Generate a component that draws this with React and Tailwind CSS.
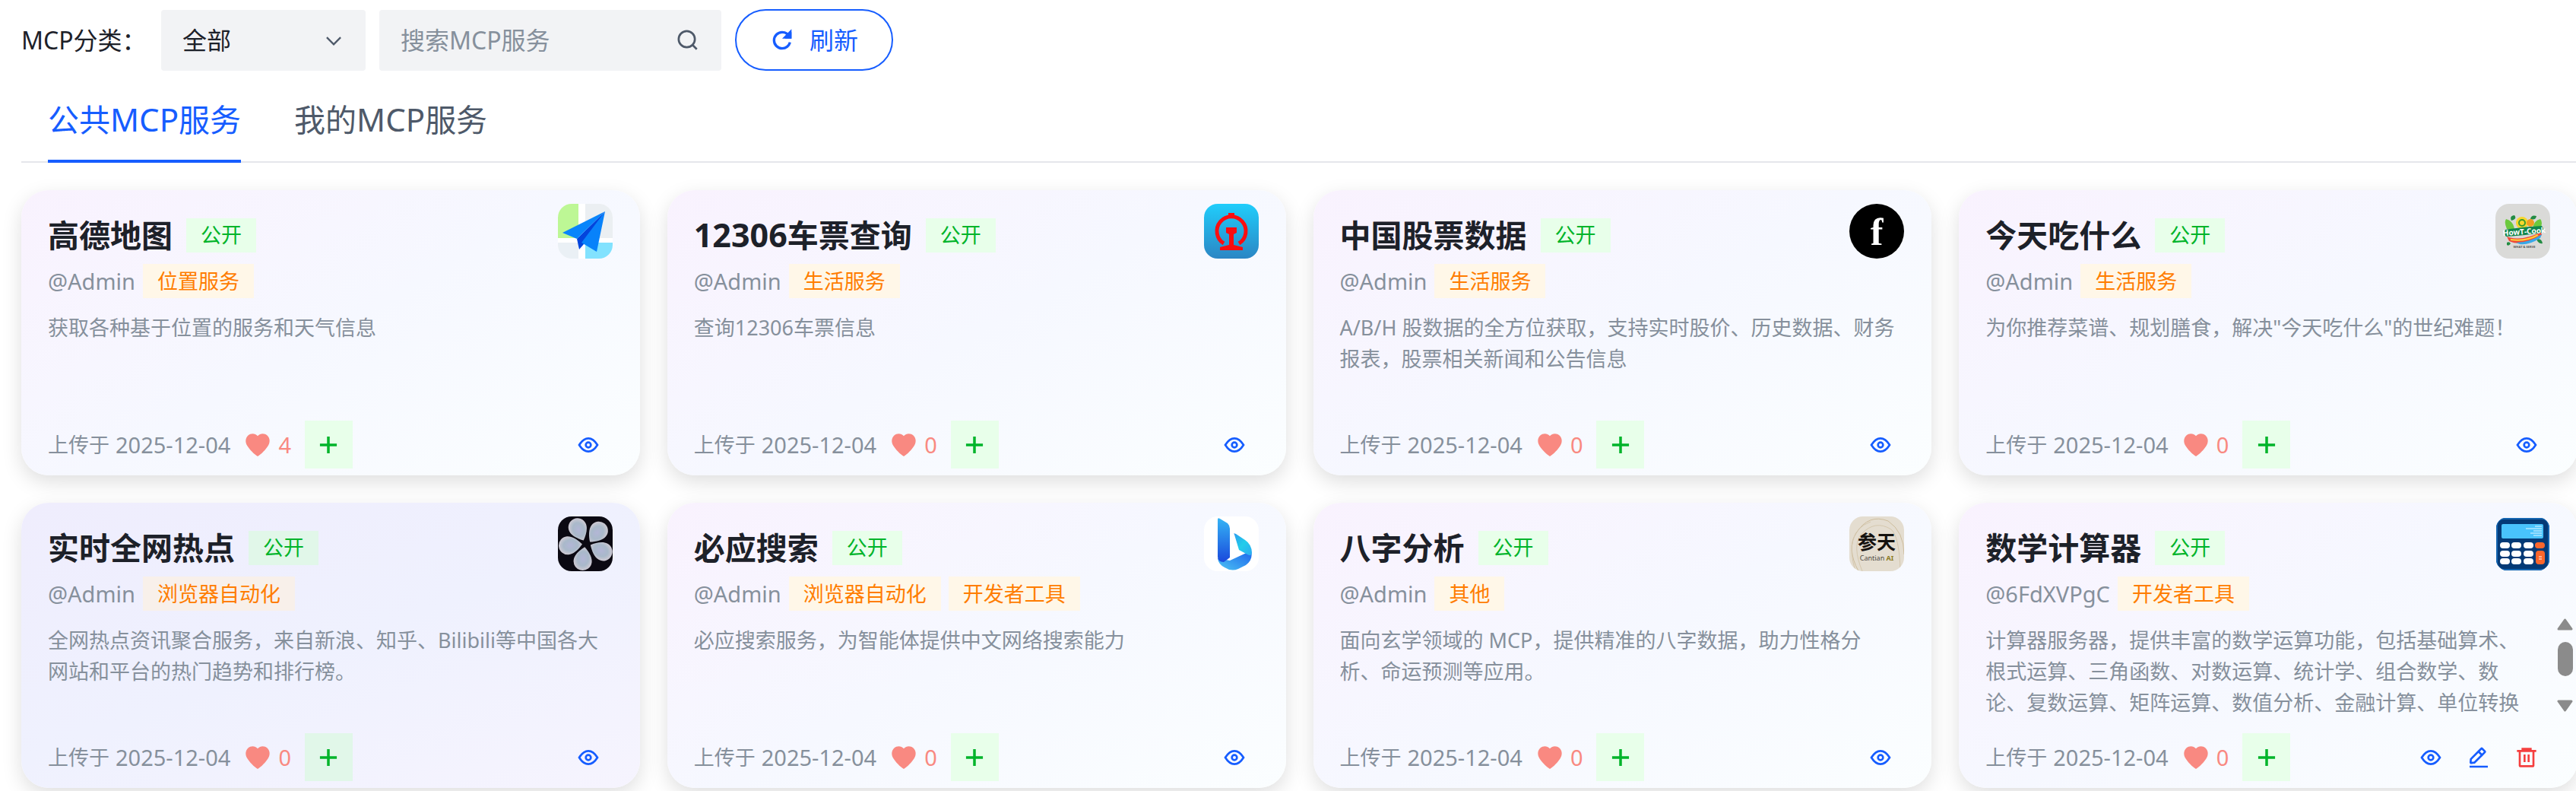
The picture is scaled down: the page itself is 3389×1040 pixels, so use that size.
import React from "react";

const glyphs = {
  eye: ["M24 37c6.627 0 12.627-4.333 18-13-5.373-8.667-11.373-13-18-13-6.627 0-12.627 4.333-18 13 5.373 8.667 11.373 13 18 13Z", "M29 24a5 5 0 1 1-10 0 5 5 0 0 1 10 0Z"],
  edit: ["m30.48 19.038 5.733-5.734a1 1 0 0 0 0-1.414l-5.586-5.586a1 1 0 0 0-1.414 0l-5.734 5.734m7 7L15.763 33.754a1 1 0 0 1-.59.286l-6.048.708a1 1 0 0 1-1.113-1.069l.477-6.31a1 1 0 0 1 .29-.631l14.7-14.7m7 7-7-7M6 42h36"],
  trash: ["M5 11h5.5m0 0v29a1 1 0 0 0 1 1h25a1 1 0 0 0 1-1V11m-27 0H16m21.5 0H43m-5.5 0H32m-16 0V7h16v4m-16 0h16M20 18v15m8-15v15"],
  plus: ["M5 24h38M24 5v38"],
  refresh: ["M38.837 18C36.463 12.136 30.715 8 24 8 15.163 8 8 15.163 8 24s7.163 16 16 16c7.455 0 13.72-5.1 15.496-12M40 8v10H30"],
  search: ["M33.072 33.071c6.248-6.248 6.248-16.379 0-22.627-6.249-6.249-16.38-6.249-22.628 0-6.248 6.248-6.248 16.379 0 22.627 6.248 6.248 16.38 6.248 22.628 0Zm0 0 8.485 8.485"],
  down: ["M39.6 17.443 24.043 33 8.487 17.443"],
};

function Icon({ name, className, stroke = 4 }) {
  return (
    <svg viewBox="0 0 48 48" fill="none" stroke="currentColor" strokeWidth={stroke} className={className} aria-hidden="true">
      {glyphs[name].map((d) => <path key={d} d={d} />)}
      {name === "refresh" && <path d="M40 8v10H30Z" fill="currentColor" />}
    </svg>
  );
}

function Heart() {
  return (
    <svg viewBox="0 0 36 36" className="size-9" aria-hidden="true">
      <path fill="currentColor" d="M18 6.2C21.2 2.4 27 2.2 30.6 5.4C34.4 8.8 34.6 14.6 31.6 19.2C28.600 24 22.800 30 18 33C13.200 30 7.400 24 4.400 19.200C1.400 14.600 1.600 8.800 5.400 5.400C9 2.200 14.800 2.400 18 6.200Z" />
    </svg>
  );
}

const petal = "M0-16C6-11 12-4 12 3A12 12 0 0 1-12 3C-12-4-6-11 0-16Z";

const logos = {
  map: (
    <>
      <rect width="72" height="72" fill="#fff" />
      <path d="M0 0H27V45H0Z" fill="#bdf795" />
      <path d="M36 0H72V45H36Z" fill="#ebeff2" />
      <path d="M0 51H27V72H0Z" fill="#eaf0f5" />
      <path d="M36 51H72V72H36Z" fill="#82e2fe" />
      <path d="M25 46 28 60 34 53 62 10Z" fill="#0345dc" />
      <path d="M62 10 6 38 25 46Z" fill="#0885fb" />
      <path d="M62 10 31 51 51 63Z" fill="#0882fa" />
    </>
  ),
  rail: (
    <>
      <defs><linearGradient id="railBg" x1="0" y1="0" x2="0" y2="1"><stop stopColor="#20cdfb" /><stop offset="1" stopColor="#2b86c4" /></linearGradient></defs>
      <rect width="72" height="72" fill="url(#railBg)" />
      <path d="M26 52A19 19 0 1 1 46 52" fill="none" stroke="#fa0d10" strokeWidth="5" />
      <path d="M32 12h8v7h-8ZM29 31h14v7l-4 2v14l12 3v4H21v-4l12-3V40l-4-2Z" fill="#fa0d10" />
    </>
  ),
  f: (
    <>
      <circle cx="36" cy="36" r="36" fill="#000" />
      <text x="36" y="54" textAnchor="middle" fontSize="50" fontWeight="700" fill="#fff" fontFamily="'Liberation Serif', serif">f</text>
    </>
  ),
  cook: (
    <>
      <rect width="72" height="72" fill="#dadad8" />
      <path d="M15 33Q11 24 14 20Q23 22 25 33ZM59 33Q63 24 59 20Q50 22 49 33Z" fill="#6cc93e" />
      <path d="M21 22Q18 16 25 15Q29 20 21 22ZM46 20Q47 14 54 16Q53 22 46 20ZM54 46Q61 45 62 52Q56 53 54 46ZM15 51q3-2 5 1-2 4-5 2Z" fill="#238c43" />
      <circle cx="35" cy="25" r="8" fill="#f7d72e" />
      <circle cx="35" cy="25" r="4" fill="none" stroke="#3b9b2b" strokeWidth="2" />
      <circle cx="46" cy="25" r="5" fill="#ef9d22" />
      <path d="M15 43Q34 50 60 37L61 41Q36 57 18 49Z" fill="#ef4938" />
      <path d="M27 51Q45 51 61 40L59 45Q43 55 32 53Z" fill="#38a8e8" />
      <path d="M20 47Q39 50 56 41" fill="none" stroke="#ffd338" strokeWidth="2" />
      <path d="M13 34Q36 30 61 29Q65 33 61 38Q36 42 14 43Q10 39 13 34Z" fill="#10864c" />
      <text x="38" y="40" textAnchor="middle" fontSize="10" fontWeight="700" fill="#fff" fontFamily="'Open Sans', sans-serif" transform="rotate(-4 38 38)">HowT-Cook</text>
      <text x="38" y="58" textAnchor="middle" fontSize="4" fontWeight="700" fill="#555" fontFamily="'Open Sans', sans-serif">WHAT &amp; SERVE</text>
    </>
  ),
  opal: (
    <>
      <defs><radialGradient id="opalFill"><stop stopColor="#b3b6d6" /><stop offset=".6" stopColor="#a9b9ca" /><stop offset="1" stopColor="#cbc8d2" /></radialGradient></defs>
      <rect width="72" height="72" fill="#0b0912" />
      <g fill="url(#opalFill)">
        <path d={petal} transform="translate(27 17) rotate(155)" />
        <path d={petal} transform="translate(52 21) rotate(218)" />
        <path d={petal} transform="translate(16 38) rotate(85)" />
        <path d={petal} transform="translate(57 45) rotate(-62)" />
        <path d={petal} transform="translate(33 56) rotate(8)" />
      </g>
    </>
  ),
  bing: (
    <>
      <defs>
        <linearGradient id="bingStem" x1="0" y1="0" x2="0" y2="1"><stop stopColor="#35b4f5" /><stop offset="1" stopColor="#1a49dc" /></linearGradient>
        <linearGradient id="bingBowl" x1="1" y1="0" x2="0" y2="1"><stop stopColor="#1c64ec" /><stop offset="1" stopColor="#4dc4f3" /></linearGradient>
        <linearGradient id="bingFin" x1="0" y1="0" x2="1" y2="1"><stop stopColor="#2c9cf0" /><stop offset=".5" stopColor="#22cdea" /><stop offset="1" stopColor="#2daaf2" /></linearGradient>
      </defs>
      <rect width="72" height="72" fill="#fff" />
      <path d="M18 55 34 58 62 45Q65 57 55 64L45 69Q36 73 27 67Q19 63 18 55Z" fill="url(#bingBowl)" />
      <path d="M40 24Q38 21 42 23L54 31Q63 37 63 48Q62 53 57 50L46 44Z" fill="url(#bingFin)" />
      <path d="M18 4Q18 1 21 3L31 9Q34 12 34 16V54L26 60Q18 60 18 53Z" fill="url(#bingStem)" />
    </>
  ),
  cantian: (
    <>
      <rect width="72" height="72" fill="#e4ddd0" />
      <path d="M12 72Q-4 42 9 22Q25-4 51 6Q72 20 72 50" fill="none" stroke="#cdbd9d" strokeWidth="1" />
      <path d="M17 72Q3 38 16 23Q34 4 55 17Q66 27 67 72M8 72Q-8 20 28 7" fill="none" stroke="#d4c7ae" strokeWidth="1" />
      <text x="36" y="43" textAnchor="middle" fontSize="25" fontWeight="700" fill="#15120f" fontFamily="'Noto Sans CJK SC', sans-serif">参天</text>
      <text x="36" y="58" textAnchor="middle" fontSize="9" fill="#4d4941" fontFamily="'Noto Sans', sans-serif">Cantian <tspan fill="#8d7a20" fontWeight="700">AI</tspan></text>
    </>
  ),
  calc: (
    <>
      <rect x="2" y="3" width="68" height="67" rx="9" fill="#043a76" stroke="#1565b0" strokeWidth="2" />
      <rect x="8" y="10" width="55" height="19" rx="2" fill="#49c3fc" />
      <path d="M52 13h9M40 16h21M50 19h11M46 22h15M50 25h11" stroke="#e7f8ff" strokeWidth="1" />
      <g fill="#fff">
        {[34, 45, 55].map((y) => [6, 21, 37].map((x) => <rect key={x + "-" + y} x={x} y={y} width="13" height="8" rx="4" />))}
      </g>
      <rect x="52" y="34" width="13" height="8" rx="4" fill="#fb672c" />
      <rect x="53" y="45" width="12" height="18" rx="4" fill="#fb672c" />
      <path d="M57 53h4M57 56h4" stroke="#fff" strokeWidth="1" />
    </>
  ),
};

const services = [
  { logo: "map", title: "高德地图", tags: ["位置服务"], likes: 4, desc: "获取各种基于位置的服务和天气信息" },
  { logo: "rail", title: "12306车票查询", tags: ["生活服务"], likes: 0, desc: "查询12306车票信息" },
  { logo: "f", title: "中国股票数据", tags: ["生活服务"], likes: 0, desc: "A/B/H 股数据的全方位获取，支持实时股价、历史数据、财务报表，股票相关新闻和公告信息" },
  { logo: "cook", title: "今天吃什么", tags: ["生活服务"], likes: 0, desc: "为你推荐菜谱、规划膳食，解决\"今天吃什么\"的世纪难题！" },
  { logo: "opal", title: "实时全网热点", tags: ["浏览器自动化"], likes: 0, active: true, desc: "全网热点资讯聚合服务，来自新浪、知乎、Bilibili等中国各大网站和平台的热门趋势和排行榜。" },
  { logo: "bing", title: "必应搜索", tags: ["浏览器自动化", "开发者工具"], likes: 0, desc: "必应搜索服务，为智能体提供中文网络搜索能力" },
  { logo: "cantian", title: "八字分析", tags: ["其他"], likes: 0, desc: "面向玄学领域的 MCP，提供精准的八字数据，助力性格分析、命运预测等应用。" },
  { logo: "calc", title: "数学计算器", author: "6FdXVPgC", tags: ["开发者工具"], likes: 0, own: true, desc: "计算器服务器，提供丰富的数学运算功能，包括基础算术、根式运算、三角函数、对数运算、统计学、组合数学、数论、复数运算、矩阵运算、数值分析、金融计算、单位转换" },
];

/* Latin runs are set slightly larger than the Chinese text around them. */
function Mixed({ text, latin }) {
  return text.split(/([A-Za-z0-9]+)/).map((part, i) => (i % 2 ? <span key={i} className={latin}>{part}</span> : part));
}

function IconButton({ name, label, danger }) {
  return (
    <button type="button" aria-label={label} className={"flex h-[63px] w-[63px] items-center justify-center " + (danger ? "text-[#f53f3f]" : "text-[#165dff]")}>
      <Icon name={name} className="size-8" />
    </button>
  );
}

function ScrollTrack() {
  return (
    <div className="flex h-[129px] w-[21px] shrink-0 flex-col items-center justify-between py-[3px] text-[#8b8b8b]" aria-hidden="true">
      <svg viewBox="0 0 21 16" className="h-4 w-[21px]"><path d="M10.500 2 19 14H2Z" fill="currentColor" stroke="currentColor" strokeWidth="3" strokeLinejoin="round" /></svg>
      <div className="mb-4 h-[45px] w-5 rounded-full bg-[#8b8b8b]" />
      <svg viewBox="0 0 21 16" className="h-4 w-[21px]"><path d="M2 2H19L10.500 14Z" fill="currentColor" stroke="currentColor" strokeWidth="3" strokeLinejoin="round" /></svg>
    </div>
  );
}

function Card({ s }) {
  return (
    <article className={"flex min-h-[375px] flex-col rounded-[36px] pt-[18px] pb-[9px] shadow-[0_9px_27px_rgba(0,0,0,0.13)] " + (s.active ? "bg-linear-160 from-[#efedfd] via-[#eff1fe] to-[#f6f4fe]" : "bg-linear-150 from-[#f9f2fe] via-[#f6f8ff] to-[#fbfeff]")}>
      <div className="flex items-start justify-between pr-9 pl-[35px]">
        <div className="pt-[18px]">
          <div className="flex h-[46px] items-center gap-[18px]">
            <h2 className="text-[41px] leading-[46px] font-bold text-[#1d2129]"><Mixed text={s.title} latin="text-[43px]" /></h2>
            <span className={"flex h-[45px] items-center px-[19px] text-[27px] leading-[36px] text-[#00b42a] " + (s.active ? "bg-[#e1f7e9]" : "bg-[#e8ffea]")}>公开</span>
          </div>
          <div className="mt-[15px] flex h-[45px] items-center gap-[10px]">
            <span className="text-[29px] leading-[36px] text-[#86909c]">@{s.author || "Admin"}</span>
            {s.tags.map((t) => (
              <span key={t} className={"flex h-[45px] items-center px-[19px] text-[27px] leading-[36px] text-[#ff7d00] " + (s.active ? "bg-[#f8f0ea]" : "bg-[#fff7e8]")}>{t}</span>
            ))}
          </div>
        </div>
        <svg viewBox="0 0 72 72" className="size-[72px] rounded-[18px]" role="img" aria-label={s.title}>{logos[s.logo]}</svg>
      </div>
      <div className="mt-[7px] flex pr-1.5 pl-[35px]">
        <p className="mr-[38px] flex-1 pt-[11px] text-[27px] leading-[41px] text-[#86909c]">{s.desc}</p>
        {s.own && <ScrollTrack />}
      </div>
      <div className="mt-auto flex items-center justify-between pr-9 pl-[35px]">
        <div className="flex items-center gap-[18px] leading-[36px]">
          <span className="flex gap-2 text-[27px] text-[#86909c]"><span>上传于</span><span className="text-[29px]">2025-12-04</span></span>
          <button type="button" aria-label="点赞" className="flex items-center gap-[9px] text-[29px] text-[#f98981]"><Heart />{s.likes}</button>
          <button type="button" aria-label="添加" className={"flex h-[63px] w-[63px] items-center justify-center text-[#00b42a] " + (s.active ? "bg-[#e1f7e9]" : "bg-[#e8ffea]")}>
            <Icon name="plus" stroke={6} className="size-7" />
          </button>
        </div>
        <div className="flex">
          <IconButton name="eye" label="查看" />
          {s.own && <IconButton name="edit" label="编辑" />}
          {s.own && <IconButton name="trash" label="删除" danger />}
        </div>
      </div>
    </article>
  );
}

export default function App() {
  return (
    <main className="overflow-hidden bg-white pt-3 pb-1 pl-7 font-['Noto_Sans','Noto_Sans_CJK_SC',sans-serif]">
      <div className="flex items-center text-[32px] text-[#1d2129]">
        <label htmlFor="category" className="w-[184px]">MCP分类：</label>
        <div className="relative">
          <select id="category" defaultValue="all" className="h-20 w-[269px] appearance-none rounded-[4px] bg-[#f2f3f5] pl-7">
            <option value="all">全部</option>
          </select>
          <Icon name="down" className="pointer-events-none absolute top-[26px] right-7 size-7 text-[#4e5969]" />
        </div>
        <div className="ml-[18px] flex h-20 w-[450px] items-center rounded-[4px] bg-[#f2f3f5] px-7">
          <input type="text" aria-label="搜索MCP服务" placeholder="搜索MCP服务" className="min-w-0 flex-1 bg-transparent outline-none placeholder:text-[#86909c]" />
          <Icon name="search" className="size-8 text-[#4e5969]" />
        </div>
        <button type="button" className="ml-[18px] flex h-[81px] w-[208px] items-center justify-center gap-5 rounded-full border-2 border-[#165dff] text-[#165dff]">
          <Icon name="refresh" stroke={5} className="size-8" />刷新
        </button>
      </div>
      <div role="tablist" className="mt-[27px] flex h-[94px] gap-[70px] border-b-2 border-[#e5e6eb] pl-[35px] text-[41px]">
        <button type="button" role="tab" aria-selected="true" className="-mb-0.5 border-b-4 border-[#165dff] pb-4 text-[#165dff]"><Mixed text="公共MCP服务" latin="text-[42px]" /></button>
        <button type="button" role="tab" aria-selected="false" className="-mb-0.5 border-b-4 border-transparent pb-4 text-[#4e5969]"><Mixed text="我的MCP服务" latin="text-[42px]" /></button>
      </div>
      <div className="mt-9 -mr-0.5 grid grid-cols-4 gap-9">
        {services.map((s) => <Card key={s.title} s={s} />)}
      </div>
    </main>
  );
}
